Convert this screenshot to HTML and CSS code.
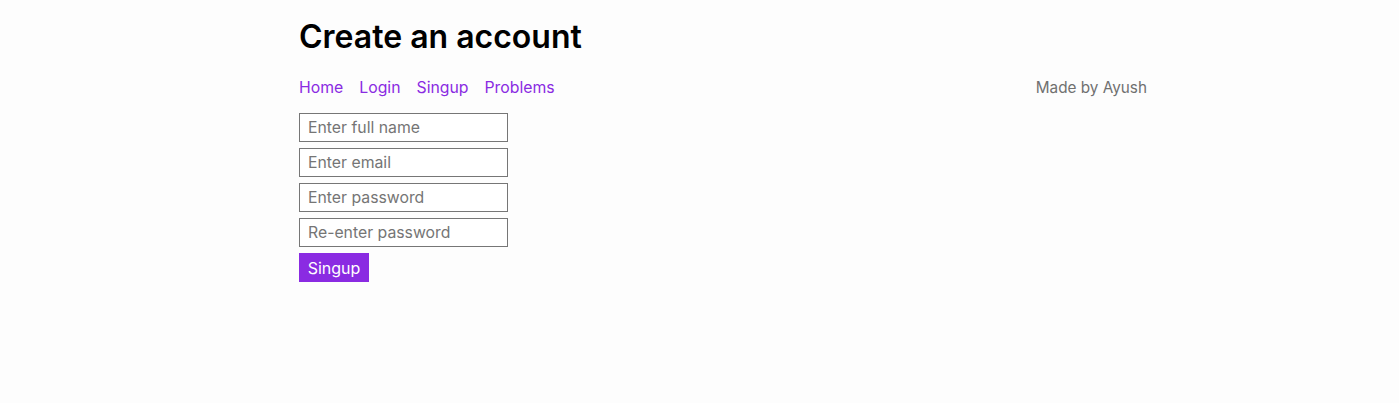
FILE: index.html
```html
<!DOCTYPE html>
<html lang="en">
<head>
<meta charset="utf-8">
<title>Create an account</title>
<link rel="stylesheet" href="styles.css">
</head>
<body>
<div class="page">
  <h1 class="title">Create an account</h1>
  <div class="navbar">
    <nav class="links">
      <a href="#">Home</a>
      <a href="#">Login</a>
      <a href="#">Singup</a>
      <a href="#">Problems</a>
    </nav>
    <span class="credit">Made by Ayush</span>
  </div>
  <form class="form">
    <input class="field" type="text" placeholder="Enter full name">
    <input class="field" type="email" placeholder="Enter email">
    <input class="field" type="password" placeholder="Enter password">
    <input class="field" type="password" placeholder="Re-enter password">
    <button class="btn" type="button">Singup</button>
  </form>
</div>
</body>
</html>
```
FILE: styles.css
```css
html, body {
  margin: 0;
  padding: 0;
  background: #fdfdfd;
}
body {
  font-family: "Inter", "Open Sans", sans-serif;
  color: #000;
}
.page {
  width: 848px;
  margin-left: 299px;
  padding-top: 16px;
}
.title {
  margin: 0;
  font-size: 32px;
  font-weight: 600;
  line-height: 42px;
}
.navbar {
  display: flex;
  justify-content: space-between;
  align-items: center;
  margin-top: 20px;
  font-size: 15.8px;
  line-height: 20px;
}
.links {
  display: flex;
  gap: 16px;
}
.links a {
  color: #8a2be2;
  text-decoration: none;
}
.credit {
  color: #707070;
  font-size: 15.3px;
}
.form {
  display: flex;
  flex-direction: column;
  align-items: flex-start;
  gap: 6px;
  margin-top: 15px;
}
.field {
  box-sizing: border-box;
  width: 209px;
  height: 29px;
  margin: 0;
  padding: 0 8px;
  border: 1px solid #767676;
  border-radius: 0;
  background: #fff;
  font-family: inherit;
  font-size: 15.8px;
  color: #222;
}
.field::placeholder {
  color: #757575;
}
.btn {
  box-sizing: border-box;
  height: 29px;
  width: 70px;
  margin: 0;
  padding: 0;
  border: none;
  background: #8a2be2;
  color: #fff;
  font-family: inherit;
  font-size: 16px;
}
```
